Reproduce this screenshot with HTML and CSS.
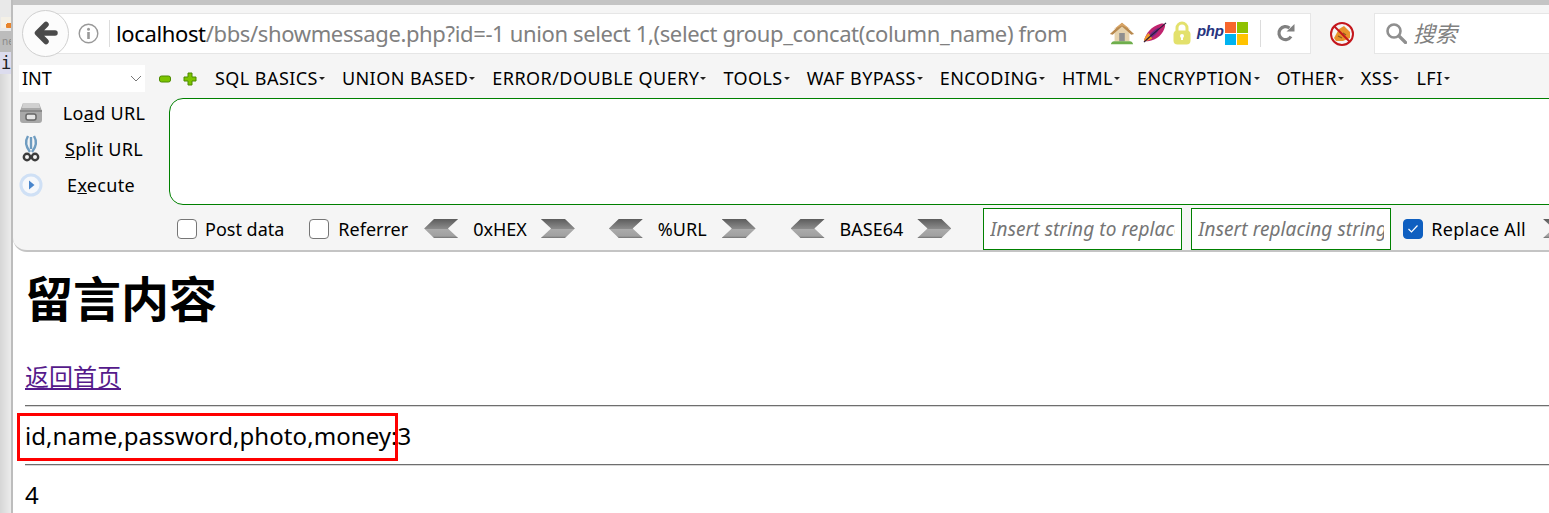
FILE: index.html
```html
<!DOCTYPE html>
<html lang="zh">
<head>
<meta charset="utf-8">
<title>留言内容</title>
<link rel="stylesheet" href="styles.css">
</head>
<body>
<div class="shell">
  <aside class="strip">
    <div class="strip-tab"><span class="strip-fav"></span></div>
    <div class="strip-dark">ne</div>
    <div class="strip-code">i</div>
    <div class="strip-rest"></div>
  </aside>
  <div class="main">
    <div class="chrome">
      <div class="nav">
        <button class="back" aria-label="Back">
          <svg width="24" height="24" viewBox="0 0 24 24"><path d="M21 12H5M12 3.500L3.500 12L12 20.500" fill="none" stroke="#4a4a4a" stroke-width="5.500" stroke-linecap="round" stroke-linejoin="round"/></svg>
        </button>
        <div class="urlbar">
          <svg class="info" width="21" height="21" viewBox="0 0 21 21"><circle cx="10.500" cy="10.500" r="9.300" fill="none" stroke="#999" stroke-width="1.400"/><circle cx="10.500" cy="6.300" r="1.500" fill="#999"/><rect x="9.200" y="9" width="2.600" height="7" fill="#999"/></svg>
          <span class="sep sep-a"></span>
          <div class="url"><span class="host">localhost</span>/bbs/showmessage.php?id=-1 union select 1,(select group_concat(column_name) from</div>
          <div class="addons">
            <svg class="home" width="26" height="26" viewBox="0 0 28 26"><path d="M6 13V22H22V13L14 5Z" fill="#e6d3ae"/><path d="M1 14L14 2L27 14L24 15L14 6L4 15Z" fill="#b98a4f"/><path d="M5 9L14 2L23 9L14 5Z" fill="#d9a566"/><rect x="11" y="13" width="6" height="9" fill="#8f8f8f"/><path d="M2 25Q3 21 7 22H21Q25 21 26 25Z" fill="#6fae4c"/></svg>
            <svg class="feather" width="24" height="24" viewBox="0 0 26 24"><path d="M1 21C3 12 9 5 19 2C21 1.500 23 2 24 3C24 9 18 18 9 20C6 21 3 21 1 21Z" fill="#c0246f"/><path d="M4 19C7 13 11 9 17 6C18 10 12 17 4 19Z" fill="#6d2a86"/><path d="M1 21C1.500 17 3 15 6 12L10 18C7 20 3 21 1 21Z" fill="#ee9a2a"/><path d="M1 22C8 15 16 9 25 1" fill="none" stroke="#2a1d3a" stroke-width="1.200"/></svg>
            <svg class="lock" width="18" height="24" viewBox="0 0 18 24"><path d="M4 11V7A5 5 0 0 1 14 7V11" fill="none" stroke="#e3e16c" stroke-width="3"/><rect x="0.500" y="9.500" width="17" height="14" rx="4" fill="#e3e16c"/><circle cx="9" cy="15" r="2" fill="#fff"/><rect x="8" y="15" width="2" height="4" fill="#fff"/></svg>
            <span class="php">php</span>
            <span class="ms"><i class="ms-a"></i><i class="ms-b"></i><i class="ms-c"></i><i class="ms-d"></i></span>
          </div>
          <span class="sep sep-b"></span>
          <svg class="reload" width="20" height="20" viewBox="0 0 20 20"><path d="M15 13.500A6.500 6.500 0 1 1 13.500 5" fill="none" stroke="#808080" stroke-width="3.200"/><path d="M10.500 8.500H18.500V1Z" fill="#808080"/></svg>
        </div>
        <svg class="noscript" width="26" height="26" viewBox="0 0 26 26"><path d="M5 17L10 8L15 5L21 11L21 17L14 20L7 20Z" fill="#e8912a"/><path d="M9 15L13 17M14 12L17 14" stroke="#8a5a20" stroke-width="1.300"/><circle cx="13" cy="13" r="11" fill="none" stroke="#c4161c" stroke-width="2"/><path d="M5.500 5.500L20.500 20.500" stroke="#c4161c" stroke-width="2"/></svg>
        <div class="searchbar">
          <svg width="22" height="22" viewBox="0 0 22 22"><circle cx="9" cy="9" r="6.500" fill="none" stroke="#8f8f8f" stroke-width="2.600"/><path d="M14 14L20.500 20.500" stroke="#8f8f8f" stroke-width="3.200" stroke-linecap="round"/></svg>
          <span class="search-label">搜索</span>
        </div>
      </div>
      <div class="hack-menu">
        <div class="select"><span class="select-text">INT</span><svg width="12" height="7" viewBox="0 0 12 7"><path d="M1 1L6 6L11 1" fill="none" stroke="#777" stroke-width="1"/></svg></div>
        <svg class="tiny minus" width="12" height="12" viewBox="0 0 12 12"><rect x="0.500" y="3" width="11" height="6" rx="2" fill="#7cc400" stroke="#4c8a00"/></svg>
        <svg class="tiny plus" width="14" height="14" viewBox="0 0 14 14"><path d="M5 1H9V5H13V9H9V13H5V9H1V5H5Z" fill="#7cc400" stroke="#4c8a00" stroke-linejoin="round"/></svg>
        <nav class="menu">
          <span class="item">SQL BASICS</span>
          <span class="item">UNION BASED</span>
          <span class="item">ERROR/DOUBLE QUERY</span>
          <span class="item">TOOLS</span>
          <span class="item">WAF BYPASS</span>
          <span class="item">ENCODING</span>
          <span class="item">HTML</span>
          <span class="item">ENCRYPTION</span>
          <span class="item">OTHER</span>
          <span class="item">XSS</span>
          <span class="item">LFI</span>
        </nav>
      </div>
      <div class="hack-body">
        <div class="actions">
          <div class="action">
            <svg width="24" height="22" viewBox="0 0 24 22"><path d="M4 1H20L23 9V18Q23 21 20 21H4Q1 21 1 18V9Z" fill="#a8a8a8"/><path d="M4 1H20L21 6H3Z" fill="#d0d0d0"/><rect x="1" y="8" width="22" height="2" fill="#8a8a8a"/><rect x="7" y="12" width="10" height="6" rx="2" fill="#e4e4e4" stroke="#666" stroke-width="1.500"/></svg>
            <span class="action-label">Lo<u>a</u>d URL</span>
          </div>
          <div class="action">
            <svg width="24" height="28" viewBox="0 0 24 28"><path d="M9 1C6 6 7 12 11 17M15 1C18 6 17 12 13 17M12 2V14" fill="none" stroke="#6f9cc0" stroke-width="2.400"/><circle cx="8" cy="22" r="3.200" fill="none" stroke="#3c3c3c" stroke-width="2.400"/><circle cx="16" cy="22" r="3.200" fill="none" stroke="#3c3c3c" stroke-width="2.400"/></svg>
            <span class="action-label"><u>S</u>plit URL</span>
          </div>
          <div class="action">
            <svg width="24" height="24" viewBox="0 0 24 24"><circle cx="12" cy="12" r="11.500" fill="#cfe0f5"/><circle cx="12" cy="12" r="8.500" fill="#f6f8fb"/><path d="M10 7.500L15.500 12L10 16.500Z" fill="#4a86cc"/></svg>
            <span class="action-label exec">E<u>x</u>ecute</span>
          </div>
        </div>
        <textarea class="post" aria-label="URL"></textarea>
      </div>
      <div class="hack-foot">
        <label class="check"><span class="box"></span>Post data</label>
        <label class="check check-ref"><span class="box"></span>Referrer</label>
        <div class="codec codec-hex"><span class="chev chev-l"></span><span class="codec-name">0xHEX</span><span class="chev chev-r"></span></div>
        <div class="codec codec-url"><span class="chev chev-l"></span><span class="codec-name">%URL</span><span class="chev chev-r"></span></div>
        <div class="codec codec-b64"><span class="chev chev-l"></span><span class="codec-name">BASE64</span><span class="chev chev-r"></span></div>
        <input class="rep rep-a" placeholder="Insert string to replace">
        <input class="rep rep-b" placeholder="Insert replacing string">
        <label class="check check-all"><span class="box box-on"><svg width="12" height="10" viewBox="0 0 12 10"><path d="M1.500 5L4.500 8L10.500 1.500" fill="none" stroke="#fff" stroke-width="1.200"/></svg></span><span class="all-text">Replace All</span></label>
        <span class="chev chev-r chev-last"></span>
      </div>
    </div>
    <main class="page">
      <h1>留言内容</h1>
      <p class="back-link"><a href="#">返回首页</a></p>
      <hr>
      <p class="line">id,name,password,photo,money:3</p>
      <hr>
      <p class="line">4</p>
      <div class="redbox"></div>
    </main>
  </div>
</div>
</body>
</html>
```
FILE: styles.css
```css
* { box-sizing: border-box; }
html, body { margin: 0; height: 100%; overflow: hidden; background: #fff; }
body { font-family: "Noto Sans", "Noto Sans CJK SC", sans-serif; color: #000; }
.shell { display: flex; width: 1549px; height: 513px; overflow: hidden; }

/* background sliver at the left */
.strip { width: 13px; flex: none; display: flex; flex-direction: column; border-right: 2px solid #bdbdbd; overflow: hidden; }
.strip-tab { height: 31px; background: #e9e9e9; padding: 17px 0 0 1px; }
.strip-fav { display: block; width: 10px; height: 11px; background: radial-gradient(circle at 80% 80%, #e8842c 25%, #f4f0e6 27%); }
.strip-dark { height: 21px; background: #bcbcbc; color: #8a8a8a; font-size: 10px; line-height: 20px; padding-left: 2px; }
.strip-code { height: 22px; background: #dcdcee; font-family: "DejaVu Sans Mono", monospace; font-size: 17px; line-height: 22px; color: #222; padding-left: 1px; }
.strip-rest { flex: 1; background: linear-gradient(90deg, #d6d6d6, #ececec); }

.main { flex: 1; min-width: 0; display: flex; flex-direction: column; position: relative; overflow: hidden; }
.chrome { height: 252px; flex: none; background: #f5f5f5; border-top: 5px solid #c4c4c4; border-bottom: 2px solid #c4c4c4; border-bottom-left-radius: 14px; }

/* navigation row */
.nav { height: 57px; display: flex; align-items: center; padding-left: 9px; }
.back { width: 47px; height: 47px; flex: none; position: relative; z-index: 1; padding: 0; display: flex; align-items: center; justify-content: center; background: #fcfcfc; border: 1px solid #d0d0d0; border-radius: 50%; margin-top: -1px; }
.urlbar { width: 1275px; height: 41px; flex: none; margin: 0 0 1px -33px; display: flex; align-items: center; background: #fff; border: 1px solid #e6e6e6; border-left: 0; }
.info { margin-left: 42px; flex: none; }
.sep { width: 1px; height: 27px; background: #dcdcdc; flex: none; }
.sep-a { margin-left: 10px; }
.url { width: 1000px; flex: none; margin-left: 6px; font-size: 22px; line-height: 30px; color: #808080; white-space: nowrap; overflow: hidden; letter-spacing: -0.365px; }
.host { color: #000; }
.addons { display: flex; align-items: center; flex: none; position: absolute; left: 1096px; }
.home { margin-right: 8px; }
.feather { margin-right: 6px; }
.lock { margin-right: 6px; }
.php { width: 26px; margin-top: -4px; font: italic bold 15px/16px "Liberation Sans", sans-serif; letter-spacing: -0.3px; color: #27347f; }
.ms { display: grid; grid-template-columns: 11px 11px; grid-auto-rows: 11px; gap: 1px; margin-left: 2px; }
.ms-a { background: #f7672d; }
.ms-b { background: #8fc100; }
.ms-c { background: #00b3f0; }
.ms-d { background: #ffc300; }
.sep-b { position: absolute; left: 1247px; }
.reload { position: absolute; left: 1263px; }
.noscript { flex: none; margin: 0 0 0 18px; }
.searchbar { width: 200px; height: 41px; flex: none; margin: 0 0 1px 19px; display: flex; align-items: center; gap: 6px; padding-left: 10px; background: #fff; border: 1px solid #e6e6e6; }
.search-label { font-size: 22px; font-style: italic; color: #808080; line-height: 30px; }

/* hackbar menu */
.hack-menu { height: 33px; display: flex; align-items: center; padding-left: 6px; }
.select { width: 126px; height: 27px; flex: none; display: flex; align-items: center; justify-content: space-between; padding: 0 3px; background: #fff; font-size: 18px; }
.select-text { margin-top: -2px; }
.tiny { flex: none; }
.minus { margin-left: 14px; }
.plus { margin-left: 12px; }
.menu { display: flex; gap: 17px; margin: -2px 0 0 18px; font-size: 18px; white-space: nowrap; letter-spacing: 0.44px; }
.item { display: flex; align-items: center; gap: 1px; }
.item::after { content: ""; border: 3px solid transparent; border-top: 3px solid #222; border-bottom: 0; margin-top: 2px; }

/* hackbar body */
.hack-body { height: 112px; display: flex; }
.actions { width: 156px; flex: none; padding: 0 0 0 6px; display: flex; flex-direction: column; }
.action { height: 36px; display: flex; align-items: center; }
.action svg { flex: none; }
.action-label { width: 122px; text-align: center; font-size: 18px; letter-spacing: 0.3px; }
.exec { padding-right: 6px; }
.post { flex: none; width: 1400px; height: 107px; margin-top: 3px; padding: 4px; background: #fff; border: 1px solid #008000; border-radius: 14px 0 0 14px; outline: 0; resize: none; }

/* hackbar footer */
.hack-foot { height: 43px; display: flex; align-items: center; padding-left: 164px; font-size: 18px; white-space: nowrap; }
.check { display: flex; align-items: center; gap: 8px; flex: none; }
.box { width: 20px; height: 20px; flex: none; display: flex; align-items: center; justify-content: center; background: #fff; border: 1px solid #767676; border-radius: 4px; }
.box-on { background: #0f5fc0; border-color: #0f5fc0; }
.all-text { letter-spacing: 0.3px; }
.check-ref { margin-left: 25px; gap: 9px; }
.codec { display: flex; align-items: center; flex: none; }
.codec-hex { margin-left: 16px; }
.codec-url { margin-left: 34px; }
.codec-b64 { margin-left: 35px; }
.codec-name { margin: 0 14px 0 15px; }
.codec-url .codec-name { margin-right: 15px; }
.chev { width: 34px; height: 19px; flex: none; background: linear-gradient(#5c5c5c, #8a8a8a 50%, #ababab 52%, #a0a0a0 90%, #707070); }
.chev-l { clip-path: polygon(0 50%, 29% 0, 100% 0, 70% 50%, 100% 100%, 29% 100%); }
.chev-r { clip-path: polygon(0 0, 71% 0, 100% 50%, 71% 100%, 0 100%, 30% 50%); }
.rep { width: 199px; height: 42px; flex: none; padding: 0 6px; background: #fff; border: 1px solid #008000; border-radius: 0; outline: 0; font: italic 19px "Noto Sans", sans-serif; letter-spacing: 0.1px; }
.rep::placeholder { color: #757575; opacity: 1; }
.rep-a { margin-left: 32px; }
.rep-b { margin-left: 9px; width: 200px; }
.check-all { margin-left: 12px; }
.chev-last { margin-left: 17px; }

/* page content */
.page { flex: 1; position: relative; padding-left: 12px; }
h1 { margin: 23px 0 0; font-size: 48px; line-height: 48px; font-weight: 700; }
.back-link { margin: 39px 0 0; font-size: 24px; line-height: 30px; }
.back-link a { color: #551a8b; }
hr { margin: 13px 0 0; width: 1600px; height: 2px; border: 0; border-top: 1px solid #6e6e6e; border-bottom: 1px solid #d8d8d8; }
.line { margin: 13px 0 0; font-size: 24px; line-height: 32px; letter-spacing: 0.07px; }
.line + hr { margin-top: 12px; }
.redbox { position: absolute; left: 4px; top: 161px; width: 381px; height: 48px; border: 3px solid #f00; }
```
